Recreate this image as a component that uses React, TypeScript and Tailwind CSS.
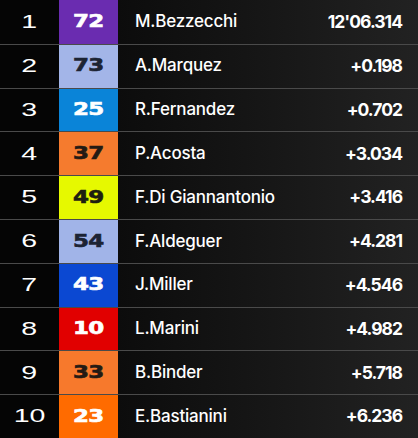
import React from "react";

type Row = { pos: number; num: string; bg: string; fg: string; name: string; time: string };

const rows: Row[] = [
  { pos: 1, num: "72", bg: "bg-[#6a2cb0]", fg: "text-white", name: "M.Bezzecchi", time: "12'06.314" },
  { pos: 2, num: "73", bg: "bg-[#a3b5e8]", fg: "text-[#1c2333]", name: "A.Marquez", time: "+0.198" },
  { pos: 3, num: "25", bg: "bg-[#0a84d8]", fg: "text-white", name: "R.Fernandez", time: "+0.702" },
  { pos: 4, num: "37", bg: "bg-[#f57b2e]", fg: "text-[#231a14]", name: "P.Acosta", time: "+3.034" },
  { pos: 5, num: "49", bg: "bg-[#e6f900]", fg: "text-[#1d2010]", name: "F.Di Giannantonio", time: "+3.416" },
  { pos: 6, num: "54", bg: "bg-[#a1b4e8]", fg: "text-[#1c2333]", name: "F.Aldeguer", time: "+4.281" },
  { pos: 7, num: "43", bg: "bg-[#0b48d2]", fg: "text-white", name: "J.Miller", time: "+4.546" },
  { pos: 8, num: "10", bg: "bg-[#e10000]", fg: "text-white", name: "L.Marini", time: "+4.982" },
  { pos: 9, num: "33", bg: "bg-[#f7792c]", fg: "text-[#231a14]", name: "B.Binder", time: "+5.718" },
  { pos: 10, num: "23", bg: "bg-[#ff6b00]", fg: "text-white", name: "E.Bastianini", time: "+6.236" },
];

export default function App() {
  return (
    <div className="w-[418px] h-[438px] bg-[#050505] grid grid-rows-10 overflow-hidden">
      {rows.map((r, i) => (
        <div
          key={r.pos}
          className={`flex items-stretch ${i > 0 ? "border-t border-[#4a4a4a]" : ""}`}
        >
          <div className="w-[59px] flex items-center justify-center bg-[#050505]">
            <span
              className="text-white text-[19px] inline-block scale-x-[1.5]"
              style={{ fontFamily: '"Liberation Sans", sans-serif', fontWeight: 400 }}
            >
              {r.pos}
            </span>
          </div>
          <div className={`w-[59px] flex items-center justify-center ${r.bg}`}>
            <span
              className={`${r.fg} text-[17px] font-black inline-block scale-x-[1.35] tracking-[-0.5px] [-webkit-text-stroke:0.6px_currentColor]`}
              style={{ fontFamily: '"DejaVu Sans", sans-serif' }}
            >
              {r.num}
            </span>
          </div>
          <div className="flex-1 flex items-center justify-between pl-[17px] pr-[16px] bg-gradient-to-r from-[#0c0c0c] to-[#222222]">
            <span
              className="text-white text-[17px] font-medium tracking-[-0.2px]"
              style={{ fontFamily: 'Inter, "Noto Sans", sans-serif' }}
            >
              {r.name}
            </span>
            <span
              className="text-white text-[17.5px] font-bold tracking-[-1px]"
              style={{ fontFamily: 'Inter, "Noto Sans", sans-serif' }}
            >
              {r.time}
            </span>
          </div>
        </div>
      ))}
    </div>
  );
}
